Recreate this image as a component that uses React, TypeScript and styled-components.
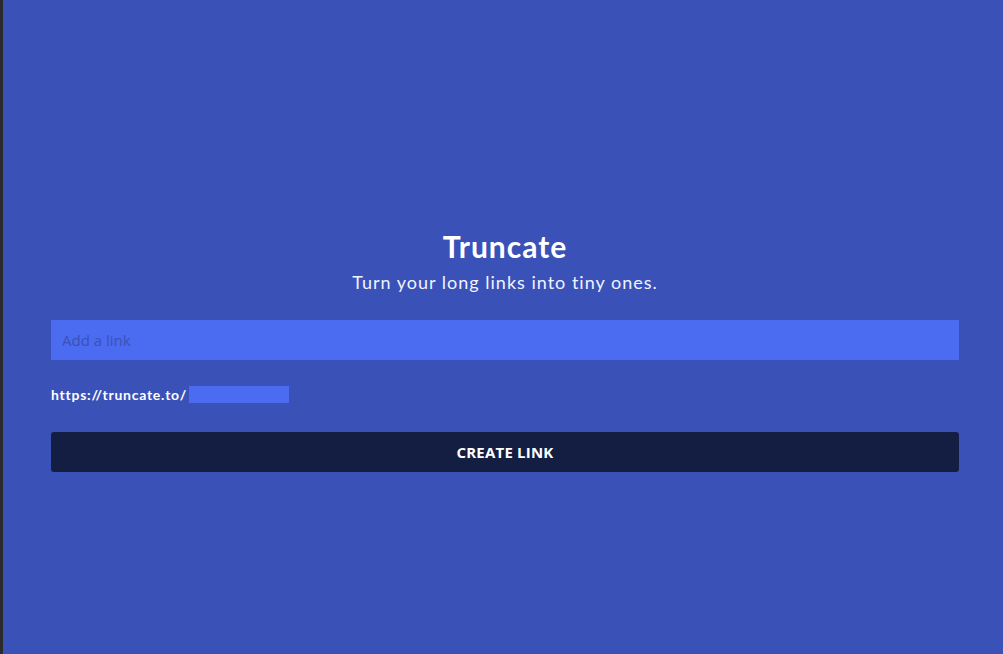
import * as React from 'react';
import styled, { createGlobalStyle } from 'styled-components';

const GlobalStyle = createGlobalStyle`
  html, body {
    margin: 0;
    padding: 0;
    background: #3a51b8;
  }
`;

const Page = styled.div`
  min-height: 654px;
  box-sizing: border-box;
  border-left: 3px solid #2b2b2f;
  background: #3a51b8;
  padding: 229px 44px 0 48px;
  font-family: Lato, "Open Sans", sans-serif;
  color: #fff;
`;

const Header = styled.header`
  display: flex;
  flex-direction: column;
  align-items: center;
`;

const Title = styled.h1`
  margin: 0;
  font-size: 30px;
  line-height: 34px;
  font-weight: 700;
  letter-spacing: 1px;
`;

const Subtitle = styled.p`
  margin: 7px 0 0;
  font-size: 18px;
  line-height: 24px;
  letter-spacing: 1px;
  color: #f1f3ff;
`;

const LinkInput = styled.input`
  display: block;
  box-sizing: border-box;
  width: 100%;
  height: 40px;
  margin-top: 26px;
  padding: 0 11px;
  border: none;
  outline: none;
  background: #4b6bf0;
  color: #fff;
  font-family: "Open Sans", sans-serif;
  font-size: 15px;
  &::placeholder {
    color: #3a51b8;
  }
`;

const SlugRow = styled.div`
  display: flex;
  align-items: center;
  margin-top: 26px;
  font-size: 14px;
  font-weight: 700;
  letter-spacing: 0.75px;
`;

const SlugInput = styled.input`
  box-sizing: border-box;
  width: 100px;
  height: 17px;
  margin-left: 2px;
  padding: 0 4px;
  border: none;
  outline: none;
  background: #4b6bf0;
  color: #fff;
`;

const CreateButton = styled.button`
  display: block;
  width: 100%;
  height: 40px;
  margin-top: 29px;
  border: none;
  border-radius: 3px;
  background: #141d42;
  color: #fff;
  font-family: "Open Sans", sans-serif;
  font-size: 15px;
  font-weight: 700;
  letter-spacing: 0.2px;
  cursor: pointer;
`;

const App = () => (
  <Page>
    <GlobalStyle />
    <Header>
      <Title>Truncate</Title>
      <Subtitle>Turn your long links into tiny ones.</Subtitle>
    </Header>
    <LinkInput placeholder="Add a link" />
    <SlugRow>
      <span>https://truncate.to/</span>
      <SlugInput />
    </SlugRow>
    <CreateButton>CREATE LINK</CreateButton>
  </Page>
);

export default App;
